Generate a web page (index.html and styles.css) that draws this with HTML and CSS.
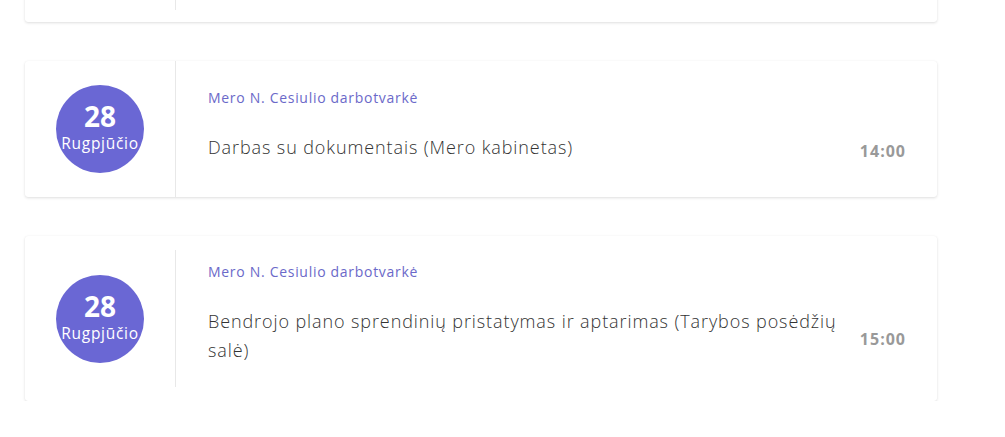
FILE: index.html
```html
<!DOCTYPE html>
<html lang="lt">
<head>
<meta charset="utf-8">
<link rel="stylesheet" href="styles.css">
</head>
<body>
<div class="list">
  <div class="card card-top">
    <div class="date-col"></div>
    <div class="info info-padded"></div>
  </div>

  <div class="card">
    <div class="date-col">
      <div class="date">
        <span class="day">28</span>
        <span class="month">Rugpjūčio</span>
      </div>
    </div>
    <div class="info">
      <div class="text">
        <div class="owner">Mero N. Cesiulio darbotvarkė</div>
        <div class="row">
          <div class="title">Darbas su dokumentais (Mero kabinetas)</div>
          <div class="time">14:00</div>
        </div>
      </div>
    </div>
  </div>

  <div class="card card-padded">
    <div class="date-col">
      <div class="date">
        <span class="day">28</span>
        <span class="month">Rugpjūčio</span>
      </div>
    </div>
    <div class="info">
      <div class="text">
        <div class="owner">Mero N. Cesiulio darbotvarkė</div>
        <div class="row">
          <div class="title">Bendrojo plano sprendinių pristatymas ir aptarimas (Tarybos posėdžių salė)</div>
          <div class="time">15:00</div>
        </div>
      </div>
    </div>
  </div>
</div>
</body>
</html>
```

FILE: styles.css
```css
* { box-sizing: border-box; }
html, body {
  margin: 0;
  padding: 0;
  background: #fff;
  font-family: "Open Sans", Lato, sans-serif;
}
.list {
  display: flex;
  flex-direction: column;
  gap: 39px;
  width: 912px;
  margin: -40px 0 0 25px;
}
.card {
  display: flex;
  background: #fff;
  border-radius: 3px;
  box-shadow: 0 1px 3px rgba(0, 0, 0, 0.13), 0 0 1px rgba(0, 0, 0, 0.06);
}
.card-top {
  height: 62px;
  padding-bottom: 12px;
}
.card-padded {
  padding: 14px 0;
}
.date-col {
  width: 150px;
  flex: none;
  display: flex;
  align-items: center;
  justify-content: center;
}
.date {
  width: 88px;
  height: 88px;
  border-radius: 50%;
  background: #6a67d4;
  color: #fff;
  display: flex;
  flex-direction: column;
  align-items: center;
  justify-content: center;
  padding-bottom: 6px;
}
.day {
  font-weight: 700;
  font-size: 28px;
  line-height: 34px;
}
.month {
  font-size: 15.5px;
  line-height: 20px;
  letter-spacing: 0.7px;
  white-space: nowrap;
}
.info {
  flex: 1;
  border-left: 1px solid #e8e8e8;
  padding: 27px 31px 35px 32px;
}
.card-padded .info {
  padding-top: 12px;
  padding-bottom: 22px;
}
.info-padded { padding: 0; }
.owner {
  font-size: 14px;
  line-height: 20px;
  letter-spacing: 0.7px;
  color: #6b69c9;
}
.row {
  display: flex;
  align-items: center;
  gap: 6px;
  margin-top: 25px;
}
.title {
  flex: 1;
  font-size: 18px;
  line-height: 29px;
  letter-spacing: 0.9px;
  color: #333;
  font-weight: 300;
}
.time {
  flex: none;
  font-size: 16px;
  letter-spacing: 1px;
  font-weight: 700;
  color: #999;
  padding-top: 6px;
}
```
